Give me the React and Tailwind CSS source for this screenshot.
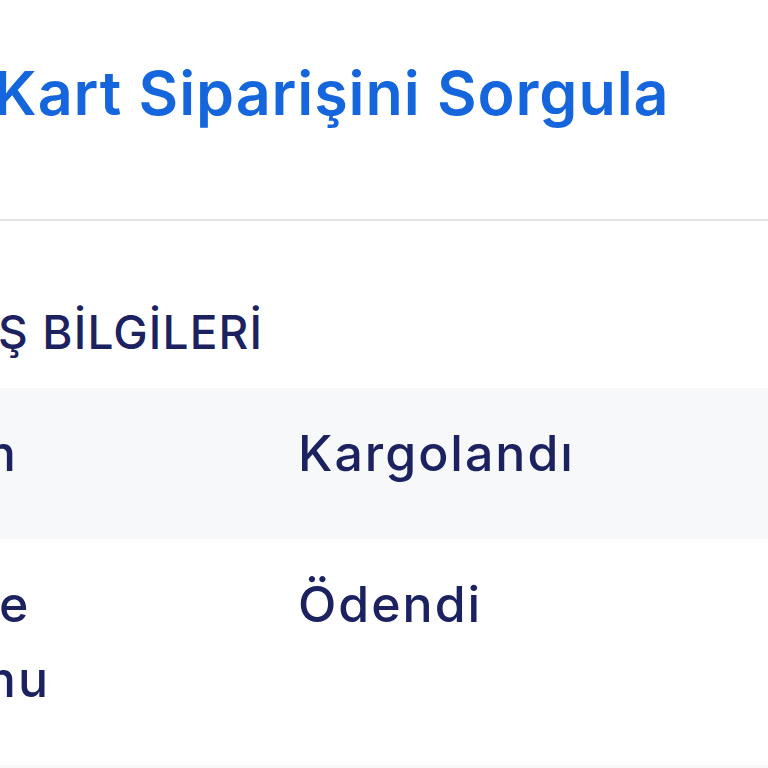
const rows = [
  { label: 'Durum', value: 'Kargolandı', striped: true },
  { label: 'Ödeme Durumu', value: 'Ödendi', striped: false },
  { label: 'Teslimat', value: '', striped: true },
];

const App = () => {
  return (
    <div className="w-full h-[768px] overflow-hidden bg-white" style={{ fontFamily: 'Inter, "Noto Sans", sans-serif' }}>
      <div className="-ml-[200px] w-[1100px]">
        <div className="pl-[10px] pt-[63px] pb-[95px]">
          <h1 className="text-[61px] leading-none font-semibold text-[#1566dc] tracking-[0.015em] whitespace-nowrap">
            Sanal Kart Siparişini Sorgula
          </h1>
        </div>
        <div className="h-[2px] bg-[#e3e3e3]" />
        <div className="pl-[48px] pt-[88px] pb-[33px]">
          <h2 className="text-[46px] leading-none font-medium text-[#1c2260] tracking-[0.025em] whitespace-nowrap">SİPARİŞ BİLGİLERİ</h2>
        </div>
        <div>
          {rows.map((row) => (
            <div
              key={row.label}
              className={`grid grid-cols-[498px_1fr] pt-7 pb-[48px] text-[50px] leading-[75px] font-medium text-[#1c2260] tracking-[0.04em] ${row.striped ? 'bg-[#f7f8fa]' : 'bg-white'}`}
            >
              <div className="pl-[48px] pr-[230px]">{row.label}</div>
              <div>{row.value}</div>
            </div>
          ))}
        </div>
      </div>
    </div>
  );
};

export default App;
